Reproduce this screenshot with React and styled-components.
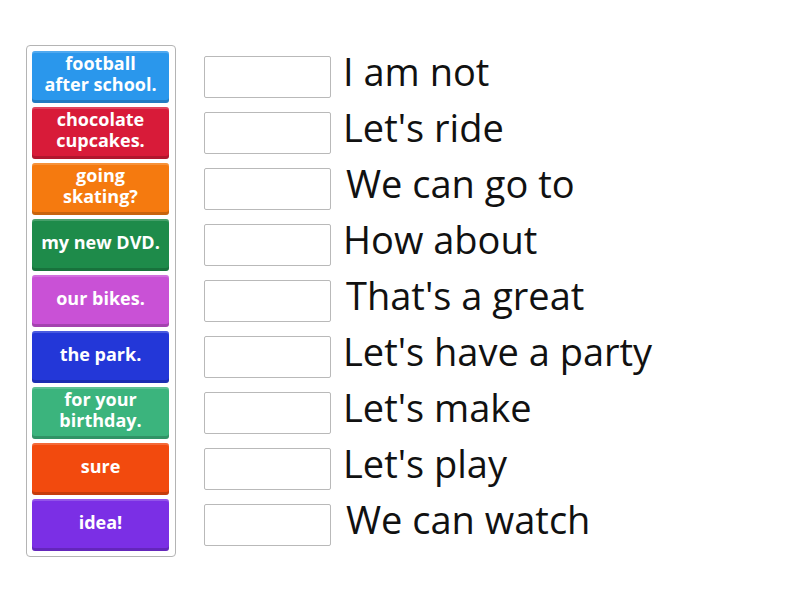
import React from "react";
import styled, { createGlobalStyle } from "styled-components";

const Global = createGlobalStyle`
  html, body { margin: 0; padding: 0; background: #fff; }
  body { font-family: "Open Sans", "Liberation Sans", sans-serif; }
`;

const Page = styled.div`
  width: 800px;
  height: 600px;
  display: flex;
  align-items: flex-start;
  padding: 45px 0 0 26px;
  box-sizing: border-box;
  gap: 28px;
`;

const Panel = styled.div`
  border: 1px solid #b4b4b4;
  border-radius: 4px;
  padding: 5px 6px 5px 5px;
  display: flex;
  flex-direction: column;
  gap: 4px;
`;

const Tile = styled.div`
  width: 137px;
  height: 52px;
  box-sizing: border-box;
  border-radius: 3px;
  background: ${(p) => p.$c};
  box-shadow: inset 0 2px 0 rgba(255, 255, 255, 0.18), inset 0 -3px 0 rgba(0, 0, 0, 0.18);
  color: #fff;
  font-weight: 700;
  font-size: 18px;
  line-height: 21px;
  display: flex;
  align-items: center;
  justify-content: center;
  text-align: center;
  padding-bottom: 6px;
`;

const Rows = styled.div`
  display: flex;
  flex-direction: column;
  padding-top: 4px;
`;

const Row = styled.div`
  height: 56px;
  display: flex;
  align-items: center;
  gap: ${(p) => 12 + (p.$shift || 0)}px;
`;

const Box = styled.div`
  width: 127px;
  height: 42px;
  box-sizing: border-box;
  border: 1px solid #b9b9b9;
  border-radius: 2px;
  background: #fff;
`;

const Phrase = styled.span`
  font-size: 38px;
  color: #111;
  line-height: 42px;
  white-space: nowrap;
  margin-bottom: 12px;
`;

const tiles = [
  ["#2a97ec", ["football", "after school."]],
  ["#d81b39", ["chocolate", "cupcakes."]],
  ["#f57a0f", ["going", "skating?"]],
  ["#1e8b4a", ["my new DVD."]],
  ["#c951d6", ["our bikes."]],
  ["#2337d8", ["the park."]],
  ["#3bb47d", ["for your", "birthday."]],
  ["#f24a0e", ["sure"]],
  ["#7b2fe5", ["idea!"]],
];

const phrases = [
  ["I am not", 0],
  ["Let's ride", 0],
  ["We can go to", 3],
  ["How about", 0],
  ["That's a great", 3],
  ["Let's have a party", 0],
  ["Let's make", 0],
  ["Let's play", 0],
  ["We can watch", 3],
];

export default function App() {
  return (
    <>
      <Global />
      <Page>
        <Panel>
          {tiles.map(([c, lines], i) => (
            <Tile key={i} $c={c}>
              <span>
                {lines.map((l, j) => (
                  <React.Fragment key={j}>
                    {j > 0 && <br />}
                    {l}
                  </React.Fragment>
                ))}
              </span>
            </Tile>
          ))}
        </Panel>
        <Rows>
          {phrases.map(([t, s], i) => (
            <Row key={i} $shift={s}>
              <Box />
              <Phrase>{t}</Phrase>
            </Row>
          ))}
        </Rows>
      </Page>
    </>
  );
}
